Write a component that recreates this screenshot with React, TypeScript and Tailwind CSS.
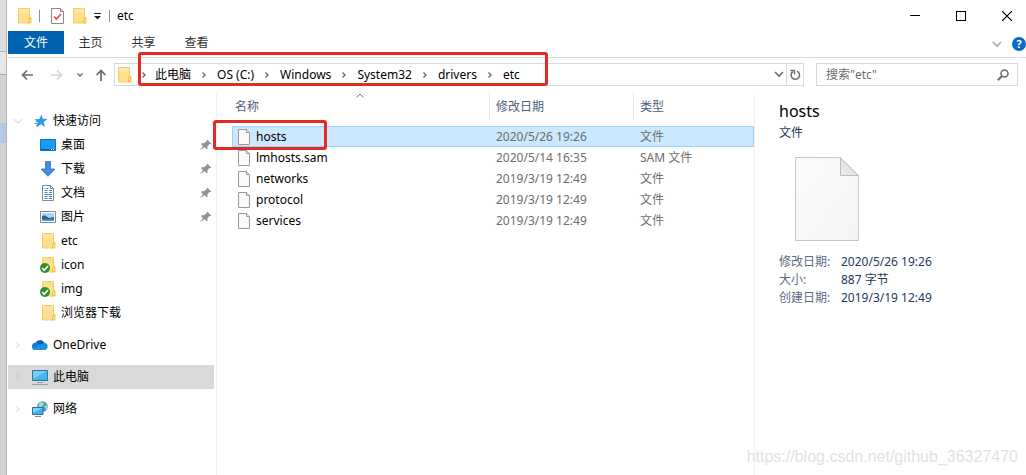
import type { ReactNode } from 'react'

type IconProps = { className?: string }

function FolderIcon({ className = '' }: IconProps) {
  return (
    <svg width="14" height="16" viewBox="0 0 14 16" className={`shrink-0 ${className}`}>
      <path d="M0.5 0.5h11v14.5h-11z" fill="#ffe08a" stroke="#f0cd70" />
      <path d="M1 1h10v4H1z" fill="#ffe9a6" opacity="0.7" />
      <path d="M12 9.5h1v5.5h-2.5v-3z" fill="#ffdd80" stroke="#e9b93c" strokeWidth="0.8" />
    </svg>
  )
}

function SyncedFolderIcon() {
  return (
    <svg width="16" height="16" viewBox="0 0 16 16" className="shrink-0">
      <path d="M2.5 0.5h11v14.5h-11z" fill="#ffe08a" stroke="#f0cd70" />
      <path d="M14 9.5h1v5.5h-2.5v-3z" fill="#ffdd80" stroke="#e9b93c" strokeWidth="0.8" />
      <circle cx="5" cy="11" r="5" fill="#2f8f2a" />
      <path d="M2.2 11l2 2.2L8 9" fill="none" stroke="#fff" strokeWidth="1.7" />
    </svg>
  )
}

function PropertiesIcon() {
  return (
    <svg width="13" height="16" viewBox="0 0 13 16">
      <path d="M0.5 0.5h9l3 3v12H0.5z" fill="#fff" stroke="#8a8a8a" />
      <path d="M9.5 0.5v3h3" fill="none" stroke="#8a8a8a" />
      <path d="M3 8.5l2.5 2.7L10 6" fill="none" stroke="#e0623a" strokeWidth="1.8" />
    </svg>
  )
}

function FileIcon() {
  return (
    <svg width="12" height="16" viewBox="0 0 12 16" className="shrink-0">
      <path d="M0.5 0.5h8l3 3v12H0.5z" fill="#fafafa" stroke="#999" />
      <path d="M8.5 0.5v3h3" fill="#e8e8e8" stroke="#999" />
    </svg>
  )
}

function LargeFileIcon() {
  return (
    <svg width="64" height="84" viewBox="0 0 64 84">
      <defs>
        <linearGradient id="sheet" x1="0" y1="0" x2="1" y2="1">
          <stop offset="0" stopColor="#fbfbfc" />
          <stop offset="1" stopColor="#f2f4f6" />
        </linearGradient>
        <linearGradient id="fold" x1="0" y1="1" x2="1" y2="0">
          <stop offset="0" stopColor="#efefef" />
          <stop offset="1" stopColor="#d4d4d4" />
        </linearGradient>
      </defs>
      <path d="M0.5 0.5h45l18 18v65H0.5z" fill="url(#sheet)" stroke="#c6c6c6" />
      <path d="M45.5 0.5v18h18z" fill="url(#fold)" stroke="#bcbcbc" />
    </svg>
  )
}

function StarIcon() {
  return (
    <svg width="16" height="16" viewBox="0 0 16 16">
      <path d="M9.6 1.500l1.300 4.300 4.600.3-3.700 2.800 1.200 5-4.200-2.700L4.300 14.500l1.600-5L2.600 6.300l4.700-.3z" fill="#2f9be8" />
      <path d="M4 8.500h3M2.500 10.500h4M4 12.500h3" stroke="#2f9be8" />
    </svg>
  )
}

function DesktopIcon() {
  return (
    <svg width="16" height="16" viewBox="0 0 16 16">
      <path d="M0.5 2.5h15v11H0.5z" fill="#1a9af5" stroke="#0b76c8" />
      <path d="M1 12.5h14" stroke="#0a5fa8" />
      <path d="M11 12.5h1M13 12.5h1" stroke="#fff" />
    </svg>
  )
}

function DownloadIcon() {
  return (
    <svg width="16" height="16" viewBox="0 0 16 16">
      <path d="M5.5 0.5h5v7.5H15L8 15.3 1 8h4.5z" fill="#3f8fdb" stroke="#2a73ba" strokeWidth="0.8" />
    </svg>
  )
}

function DocumentIcon() {
  return (
    <svg width="16" height="16" viewBox="0 0 16 16">
      <path d="M2.5 0.5h8l3 3v12h-11z" fill="#fff" stroke="#7d8b99" />
      <path d="M10.5 0.5v3h3" fill="none" stroke="#7d8b99" />
      <path d="M4.5 3.5h1M6.5 3.5h2M4.5 5.5h3M9 5.5h3M4.5 7.5h3M9 7.5h3M4.5 9.5h7.5M4.5 11.5h3M9 11.5h3M4.5 13.5h3M9 13.5h3" stroke="#3d84c6" />
    </svg>
  )
}

function PictureIcon() {
  return (
    <svg width="16" height="16" viewBox="0 0 16 16">
      <path d="M0.5 2.5h15v11H0.5z" fill="#fff" stroke="#7d8b99" />
      <path d="M2 4h12v8H2z" fill="#a9d4f5" />
      <path d="M2 7l3-.8L9 9l5-1v4H2z" fill="#2e6487" />
      <path d="M2 10.5h12V12H2z" fill="#5ba0d6" />
    </svg>
  )
}

function OneDriveIcon() {
  return (
    <svg width="17" height="16" viewBox="0 0 17 16">
      <path d="M3.500 6.300a4.900 4.900 0 0 1 9-.4L8 10z" fill="#0a5cad" />
      <path d="M3.700 13a3.600 3.600 0 0 1-.2-7.200c1.800-.2 3 .6 4.200 1.600L13 12z" fill="#1478cf" />
      <path d="M12.200 5.700a3.700 3.700 0 0 1 .6 7.300H3.500c-1.500 0-2.400-.8-2.900-1.800z" fill="#1f8fe0" />
    </svg>
  )
}

function ComputerIcon() {
  return (
    <svg width="16" height="16" viewBox="0 0 16 16">
      <path d="M0.5 1.5h15v10H0.5z" fill="#45b2f2" stroke="#35739c" />
      <path d="M1 2h14L1 10z" fill="#7accf8" />
      <path d="M5 13.5h6" stroke="#8aa0ae" />
      <path d="M0 15.5h16" stroke="#8ba3b3" />
    </svg>
  )
}

function NetworkIcon() {
  return (
    <svg width="16" height="16" viewBox="0 0 16 16">
      <circle cx="10.5" cy="5.5" r="5.300" fill="#4f9bc9" />
      <path d="M7 2.500q3-2.500 5 0l-2 3-3 1zM12.500 5l3-1q.5 3-1.500 5z" fill="#a5dcc4" />
      <path d="M0.500 6.500h10.500v7H0.500z" fill="#3fb0f2" stroke="#2a6f9f" />
      <path d="M1 7h9.500L1 12z" fill="#82d0fa" />
      <path d="M3 15.500h6" stroke="#6b8ca3" />
    </svg>
  )
}

function PinIcon() {
  return (
    <svg width="12" height="12" viewBox="0 0 12 12" className="ml-auto mr-[2px]">
      <path d="M7 0.500l4.500 4.300-1.200.5-.7-.3-2.100 2.300.1 2.200-.9.700-2.300-2.200L0.800 11l-.4-.4L3 7.100.900 4.900l.8-.8 2.200.1L6.700 2.200l-.3-.8z" fill="#8b959e" />
    </svg>
  )
}

function Chevron({ className = '' }: IconProps) {
  return (
    <svg width="6" height="8" viewBox="0 0 6 8" className={className}>
      <path d="M1.500 1.500L4 4 1.500 6.500" fill="none" stroke="currentColor" strokeWidth="1.400" />
    </svg>
  )
}

function ChevronDown({ className = '' }: IconProps) {
  return (
    <svg width="10" height="7" viewBox="0 0 10 7" className={className}>
      <path d="M1 1l4 4 4-4" fill="none" stroke="currentColor" strokeWidth="1.6" />
    </svg>
  )
}

const menuTabs = ['主页', '共享', '查看']

const path = ['此电脑', 'OS (C:)', 'Windows', 'System32', 'drivers', 'etc']

const quickAccess = [
  { label: '桌面', icon: <DesktopIcon />, pinned: true },
  { label: '下载', icon: <DownloadIcon />, pinned: true },
  { label: '文档', icon: <DocumentIcon />, pinned: true },
  { label: '图片', icon: <PictureIcon />, pinned: true },
  { label: 'etc', icon: <FolderIcon /> },
  { label: 'icon', icon: <SyncedFolderIcon /> },
  { label: 'img', icon: <SyncedFolderIcon /> },
  { label: '浏览器下载', icon: <FolderIcon /> },
]

const files = [
  { name: 'hosts', date: '2020/5/26 19:26', type: '文件', selected: true },
  { name: 'lmhosts.sam', date: '2020/5/14 16:35', type: 'SAM 文件' },
  { name: 'networks', date: '2019/3/19 12:49', type: '文件' },
  { name: 'protocol', date: '2019/3/19 12:49', type: '文件' },
  { name: 'services', date: '2019/3/19 12:49', type: '文件' },
]

const details = [
  { label: '修改日期:', value: '2020/5/26 19:26' },
  { label: '大小:', value: '887 字节' },
  { label: '创建日期:', value: '2019/3/19 12:49' },
]

function TitleBar() {
  return (
    <header className="flex h-[31px] items-center">
      <FolderIcon className="ml-[10px]" />
      <span className="ml-[7px] h-3 w-px bg-[#8f8f8f]" />
      <button aria-label="属性" className="ml-[11px]">
        <PropertiesIcon />
      </button>
      <button aria-label="新建文件夹" className="ml-[9px]">
        <FolderIcon />
      </button>
      <button aria-label="自定义快速访问工具栏" className="ml-[7px]">
        <svg width="8" height="8" viewBox="0 0 8 8">
          <path d="M0 1.500h7" stroke="#222" />
          <path d="M0 4h7L3.500 7.500z" fill="#222" />
        </svg>
      </button>
      <span className="ml-[7px] h-3 w-px bg-[#8f8f8f]" />
      <h1 className="ml-[7px]">etc</h1>
      <div className="ml-auto flex h-full">
        <button aria-label="最小化" className="grid w-[46px] place-items-center">
          <span className="h-px w-[10px] bg-black" />
        </button>
        <button aria-label="最大化" className="grid w-[46px] place-items-center">
          <span className="size-[10px] border border-black" />
        </button>
        <button aria-label="关闭" className="grid w-[42px] place-items-center pl-1">
          <svg width="10" height="10" viewBox="0 0 10 10">
            <path d="M0 0l10 10M10 0L0 10" stroke="#000" strokeWidth="1.200" />
          </svg>
        </button>
      </div>
    </header>
  )
}

function Ribbon() {
  return (
    <div className="flex h-[27px] items-start border-b border-[#dadbdc]">
      <button className="h-[23px] w-14 bg-[#0063b1] text-white">文件</button>
      {menuTabs.map((tab) => (
        <button key={tab} className="h-6 w-[53px] text-[#333]">
          {tab}
        </button>
      ))}
      <div className="ml-auto flex h-[26px] items-center gap-[10px]">
        <button aria-label="展开功能区" className="text-[#a8a8a8]">
          <ChevronDown />
        </button>
        <button
          aria-label="帮助"
          className="size-[14px] rounded-full bg-[#0a6cc8] text-[11px] leading-[14px] font-bold text-white"
        >
          ?
        </button>
      </div>
    </div>
  )
}

function AddressBar() {
  return (
    <div className="relative flex h-[35px] items-start pt-[5px] pr-2">
      <div className="flex h-[23px] w-[106px] shrink-0 items-center text-[#6b6b6b]">
        <button aria-label="后退" className="ml-[13px]">
          <svg width="12" height="12" viewBox="0 0 12 12">
            <path d="M12 6H1.500M6 1.500L1.500 6 6 10.500" fill="none" stroke="currentColor" strokeWidth="1.600" />
          </svg>
        </button>
        <button aria-label="前进" className="ml-[18px] text-[#d6d6d6]">
          <svg width="12" height="12" viewBox="0 0 12 12">
            <path d="M0 6h10.500M6 1.500L10.500 6 6 10.500" fill="none" stroke="currentColor" strokeWidth="1.600" />
          </svg>
        </button>
        <button aria-label="最近浏览的位置" className="ml-[13px]">
          <svg width="8" height="6" viewBox="0 0 8 6">
            <path d="M1.500 1.500L4 4l2.500-2.500" fill="none" stroke="currentColor" strokeWidth="1.400" />
          </svg>
        </button>
        <button aria-label="上移" className="ml-[11px]">
          <svg width="12" height="12" viewBox="0 0 12 12">
            <path d="M6 12V1.500M1.500 6L6 1.500 10.500 6" fill="none" stroke="currentColor" strokeWidth="1.700" />
          </svg>
        </button>
      </div>

      <div className="flex h-[23px] flex-1 items-center border border-[#d9d9d9]">
        <FolderIcon className="ml-[3px]" />
        <nav aria-label="路径" className="flex items-center">
          {path.map((part) => (
            <span key={part} className="group flex items-center">
              <span className="grid w-[26px] place-items-center text-[#6b6b6b] group-first:w-[23px]">
                <Chevron />
              </span>
              <button className="whitespace-nowrap">{part}</button>
            </span>
          ))}
        </nav>
        <button aria-label="以前的位置" className="mr-[2px] ml-auto text-[#6b6b6b]">
          <ChevronDown />
        </button>
        <button
          aria-label="刷新"
          className="grid h-full w-[17px] place-items-center border-l border-[#d9d9d9] text-[#6b6b6b]"
        >
          <svg width="11" height="12" viewBox="0 0 11 12">
            <path d="M7 2.200a4.200 4.200 0 1 1-4.200.5" fill="none" stroke="currentColor" strokeWidth="1.500" />
            <path d="M0.300 1.500H4.500v4" fill="none" stroke="currentColor" strokeWidth="1.400" />
          </svg>
        </button>
      </div>

      <label className="ml-3 flex h-[23px] w-[202px] items-center border border-[#d9d9d9] pr-2 pl-[9px]">
        <input
          type="text"
          aria-label="搜索"
          placeholder={'搜索"etc"'}
          className="w-full min-w-0 bg-transparent outline-none placeholder:text-[#6d6d6d]"
        />
        <svg width="12" height="12" viewBox="0 0 12 12" className="shrink-0 text-[#6b6b6b]">
          <circle cx="7.500" cy="4.500" r="3.500" fill="none" stroke="currentColor" strokeWidth="1.500" />
          <path d="M5 7L0.800 11.200" stroke="currentColor" strokeWidth="2" />
        </svg>
      </label>

      {/* Highlight around the path */}
      <div className="pointer-events-none absolute -top-[6px] left-[130px] h-[34px] w-[410px] rounded-[3px] border-3 border-[#e32a25]" />
    </div>
  )
}

function TreeRoot({
  icon,
  label,
  open = false,
  selected = false,
}: {
  icon: ReactNode
  label: string
  open?: boolean
  selected?: boolean
}) {
  return (
    <button className={`flex h-6 w-full items-center ${selected ? 'bg-[#d9d9d9]' : ''}`}>
      <span className={`grid w-6 place-items-center pr-1 ${selected ? 'text-[#cbcbcb]' : 'text-[#e4e4e4]'}`}>
        {open ? <ChevronDown /> : <Chevron />}
      </span>
      <span className="w-[21px]">{icon}</span>
      {label}
    </button>
  )
}

function Sidebar() {
  return (
    <aside className="flex w-[209px] shrink-0 flex-col gap-2 border-r border-[#f2f2f2] pt-4 pr-[2px]">
      <div>
        <TreeRoot icon={<StarIcon />} label="快速访问" open />
        <ul>
          {quickAccess.map((item) => (
            <li key={item.label}>
              <button className="flex h-6 w-full items-center pl-8">
                <span className="flex w-4 justify-end">{item.icon}</span>
                <span className="ml-[5px]">{item.label}</span>
                {item.pinned && <PinIcon />}
              </button>
            </li>
          ))}
        </ul>
      </div>
      <TreeRoot icon={<OneDriveIcon />} label="OneDrive" />
      <TreeRoot icon={<ComputerIcon />} label="此电脑" selected />
      <TreeRoot icon={<NetworkIcon />} label="网络" />
    </aside>
  )
}

function FileList() {
  return (
    <main className="relative min-w-0 flex-1 pl-[15px]">
      <table className="w-full table-fixed border-collapse text-left">
        <thead className="text-[#4c607a]">
          <tr className="h-[33px] align-top">
            <th className="w-[258px] p-0 font-normal">
              <div className="h-[27px] border-r border-[#e5e5e5] pl-[3px] leading-[27px]">名称</div>
            </th>
            <th className="w-36 p-0 font-normal">
              <div className="h-[27px] border-r border-[#e5e5e5] pl-[6px] leading-[27px]">修改日期</div>
            </th>
            <th className="p-0 font-normal">
              <div className="h-[27px] pl-[6px] leading-[27px]">类型</div>
            </th>
          </tr>
        </thead>
        <tbody className="text-[#6d6d6d]">
          {files.map((file) => (
            <tr
              key={file.name}
              className={`h-[21px] ${file.selected ? 'bg-[#cce8ff] outline outline-1 -outline-offset-1 outline-[#99d1ff]' : ''}`}
            >
              <td className="p-0">
                <div className="flex items-center gap-[6px] pl-[6px] text-black">
                  <FileIcon />
                  {file.name}
                </div>
              </td>
              <td className="p-0 pl-[6px]">{file.date}</td>
              <td className="p-0 pl-[6px]">{file.type}</td>
            </tr>
          ))}
        </tbody>
      </table>

      {/* Ascending sort mark */}
      <svg width="8" height="5" viewBox="0 0 8 5" className="absolute top-0 left-[139px]">
        <path d="M0.500 4.500L4 1l3.500 3.500" fill="none" stroke="#6b6b6b" />
      </svg>

      {/* Highlight around the hosts file */}
      <div className="pointer-events-none absolute top-[27px] -left-1 h-[30px] w-[114px] rounded-[3px] border-3 border-[#e32a25]" />
    </main>
  )
}

function DetailsPane() {
  return (
    <section className="w-[272px] shrink-0 border-l border-[#f2f2f2] pt-2 pl-6">
      <h2 className="text-[16px] leading-5 text-black">hosts</h2>
      <p className="mt-[3px] leading-[18px] text-[#1e395b]">文件</p>
      <div className="mt-[15px] ml-4">
        <LargeFileIcon />
      </div>
      <dl className="mt-3 grid grid-cols-[62px_1fr] leading-[18px]">
        {details.map((row) => (
          <div key={row.label} className="contents">
            <dt className="text-[#5a6b80]">{row.label}</dt>
            <dd className="text-[#1e395b]">{row.value}</dd>
          </div>
        ))}
      </dl>
    </section>
  )
}

// Edge of the window that lies behind the explorer
function BackgroundEdge() {
  return (
    <div className="flex w-[7px] shrink-0 flex-col border-r border-[#b5b5b5] bg-[#d2d2d2]">
      <div className="h-[52px] border-b border-[#9fb6d8] bg-[#dcdcdc]" />
      <div className="h-[23px] border-b border-[#a8a8a8] bg-[#e6e6e6]" />
      <div className="mt-12 h-5 bg-[#b4c8e8]" />
    </div>
  )
}

export default function App() {
  return (
    <div className="relative flex min-h-screen overflow-hidden bg-white font-['Noto_Sans','Noto_Sans_CJK_SC',sans-serif] text-[12px] leading-[18px] text-black">
      <BackgroundEdge />
      <div className="flex min-w-0 flex-1 flex-col pl-px">
        <TitleBar />
        <Ribbon />
        <AddressBar />
        <div className="flex flex-1">
          <Sidebar />
          <FileList />
          <DetailsPane />
        </div>
      </div>
      <p className="absolute right-2 bottom-2 font-['Liberation_Sans',sans-serif] text-[16px] leading-5 text-[#e2e2e2]">
        https://blog.csdn.net/github_36327470
      </p>
    </div>
  )
}
